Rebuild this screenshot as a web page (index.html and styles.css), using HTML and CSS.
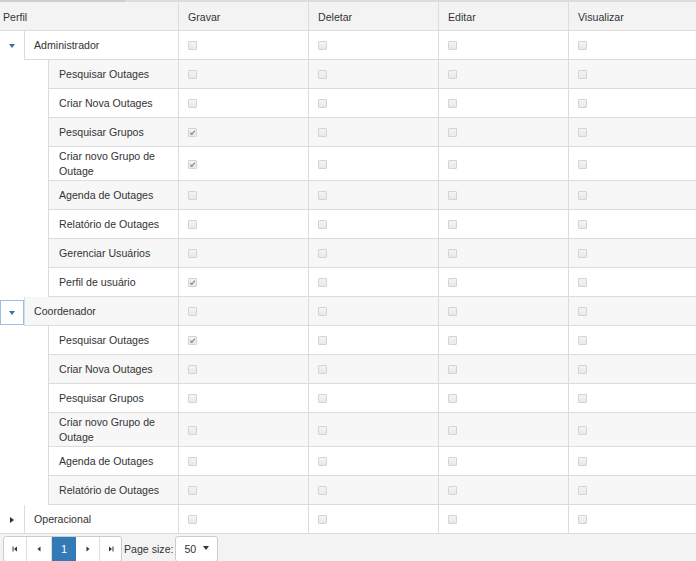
FILE: index.html
```html
<!DOCTYPE html>
<html lang="pt">
<head>
<meta charset="utf-8">
<title>Perfis</title>
<link rel="stylesheet" href="styles.css">
</head>
<body>
<div class="grid">
  <div class="topbar"><div class="thumb"></div></div>
  <div class="row head">
    <div class="h first">Perfil</div>
    <div class="h">Gravar</div>
    <div class="h">Deletar</div>
    <div class="h">Editar</div>
    <div class="h">Visualizar</div>
  </div>

  <div class="row">
    <div class="tree"><span class="exp"><i class="tri-down"></i></span><div class="c name">Administrador</div></div>
    <div class="c"><span class="cb"></span></div><div class="c"><span class="cb"></span></div><div class="c"><span class="cb"></span></div><div class="c"><span class="cb"></span></div>
  </div>
  <div class="row alt">
    <div class="tree"><span class="ind"></span><div class="c name child">Pesquisar Outages</div></div>
    <div class="c"><span class="cb"></span></div><div class="c"><span class="cb"></span></div><div class="c"><span class="cb"></span></div><div class="c"><span class="cb"></span></div>
  </div>
  <div class="row">
    <div class="tree"><span class="ind"></span><div class="c name child">Criar Nova Outages</div></div>
    <div class="c"><span class="cb"></span></div><div class="c"><span class="cb"></span></div><div class="c"><span class="cb"></span></div><div class="c"><span class="cb"></span></div>
  </div>
  <div class="row alt">
    <div class="tree"><span class="ind"></span><div class="c name child">Pesquisar Grupos</div></div>
    <div class="c"><span class="cb on"><svg viewBox="0 0 7 7"><path d="M1.2 3.8 L2.8 5.3 L5.8 1.6" fill="none" stroke="#8a8a8a" stroke-width="1.3"/></svg></span></div><div class="c"><span class="cb"></span></div><div class="c"><span class="cb"></span></div><div class="c"><span class="cb"></span></div>
  </div>
  <div class="row">
    <div class="tree"><span class="ind"></span><div class="c name child">Criar novo Grupo de Outage</div></div>
    <div class="c"><span class="cb on"><svg viewBox="0 0 7 7"><path d="M1.2 3.8 L2.8 5.3 L5.8 1.6" fill="none" stroke="#8a8a8a" stroke-width="1.3"/></svg></span></div><div class="c"><span class="cb"></span></div><div class="c"><span class="cb"></span></div><div class="c"><span class="cb"></span></div>
  </div>
  <div class="row alt">
    <div class="tree"><span class="ind"></span><div class="c name child">Agenda de Outages</div></div>
    <div class="c"><span class="cb"></span></div><div class="c"><span class="cb"></span></div><div class="c"><span class="cb"></span></div><div class="c"><span class="cb"></span></div>
  </div>
  <div class="row">
    <div class="tree"><span class="ind"></span><div class="c name child">Relatório de Outages</div></div>
    <div class="c"><span class="cb"></span></div><div class="c"><span class="cb"></span></div><div class="c"><span class="cb"></span></div><div class="c"><span class="cb"></span></div>
  </div>
  <div class="row alt">
    <div class="tree"><span class="ind"></span><div class="c name child">Gerenciar Usuários</div></div>
    <div class="c"><span class="cb"></span></div><div class="c"><span class="cb"></span></div><div class="c"><span class="cb"></span></div><div class="c"><span class="cb"></span></div>
  </div>
  <div class="row">
    <div class="tree"><span class="ind"></span><div class="c name child">Perfil de usuário</div></div>
    <div class="c"><span class="cb on"><svg viewBox="0 0 7 7"><path d="M1.2 3.8 L2.8 5.3 L5.8 1.6" fill="none" stroke="#8a8a8a" stroke-width="1.3"/></svg></span></div><div class="c"><span class="cb"></span></div><div class="c"><span class="cb"></span></div><div class="c"><span class="cb"></span></div>
  </div>

  <div class="row alt">
    <div class="tree"><span class="exp focus"><span class="fbox"><i class="tri-down"></i></span></span><div class="c name">Coordenador</div></div>
    <div class="c"><span class="cb"></span></div><div class="c"><span class="cb"></span></div><div class="c"><span class="cb"></span></div><div class="c"><span class="cb"></span></div>
  </div>
  <div class="row">
    <div class="tree"><span class="ind"></span><div class="c name child">Pesquisar Outages</div></div>
    <div class="c"><span class="cb on"><svg viewBox="0 0 7 7"><path d="M1.2 3.8 L2.8 5.3 L5.8 1.6" fill="none" stroke="#8a8a8a" stroke-width="1.3"/></svg></span></div><div class="c"><span class="cb"></span></div><div class="c"><span class="cb"></span></div><div class="c"><span class="cb"></span></div>
  </div>
  <div class="row alt">
    <div class="tree"><span class="ind"></span><div class="c name child">Criar Nova Outages</div></div>
    <div class="c"><span class="cb"></span></div><div class="c"><span class="cb"></span></div><div class="c"><span class="cb"></span></div><div class="c"><span class="cb"></span></div>
  </div>
  <div class="row">
    <div class="tree"><span class="ind"></span><div class="c name child">Pesquisar Grupos</div></div>
    <div class="c"><span class="cb"></span></div><div class="c"><span class="cb"></span></div><div class="c"><span class="cb"></span></div><div class="c"><span class="cb"></span></div>
  </div>
  <div class="row alt">
    <div class="tree"><span class="ind"></span><div class="c name child">Criar novo Grupo de Outage</div></div>
    <div class="c"><span class="cb"></span></div><div class="c"><span class="cb"></span></div><div class="c"><span class="cb"></span></div><div class="c"><span class="cb"></span></div>
  </div>
  <div class="row">
    <div class="tree"><span class="ind"></span><div class="c name child">Agenda de Outages</div></div>
    <div class="c"><span class="cb"></span></div><div class="c"><span class="cb"></span></div><div class="c"><span class="cb"></span></div><div class="c"><span class="cb"></span></div>
  </div>
  <div class="row alt">
    <div class="tree"><span class="ind"></span><div class="c name child">Relatório de Outages</div></div>
    <div class="c"><span class="cb"></span></div><div class="c"><span class="cb"></span></div><div class="c"><span class="cb"></span></div><div class="c"><span class="cb"></span></div>
  </div>

  <div class="row">
    <div class="tree"><span class="exp"><i class="tri-right"></i></span><div class="c name">Operacional</div></div>
    <div class="c"><span class="cb"></span></div><div class="c"><span class="cb"></span></div><div class="c"><span class="cb"></span></div><div class="c"><span class="cb"></span></div>
  </div>

  <div class="pager">
    <div class="btns">
      <span class="pb w23"><svg viewBox="0 0 6 6" width="6" height="6"><rect x="0.5" y="0.5" width="1" height="5" fill="#333"/><path d="M5 0.5 L5 5.5 L2 3 Z" fill="#333"/></svg></span>
      <span class="pb w25"><svg viewBox="0 0 6 6" width="6" height="6"><path d="M4.5 0.5 L4.5 5.5 L1.5 3 Z" fill="#333"/></svg></span>
      <span class="pb cur">1</span>
      <span class="pb w24"><svg viewBox="0 0 6 6" width="6" height="6"><path d="M1.5 0.5 L1.5 5.5 L4.5 3 Z" fill="#333"/></svg></span>
      <span class="pb w22 last"><svg viewBox="0 0 6 6" width="6" height="6"><path d="M1 0.5 L1 5.5 L4 3 Z" fill="#333"/><rect x="4.5" y="0.5" width="1" height="5" fill="#333"/></svg></span>
    </div>
    <span class="ps">Page size:</span>
    <span class="dd"><span class="ddv">50</span><svg viewBox="0 0 6 4" width="6" height="4"><path d="M0 0 L6 0 L3 4 Z" fill="#333"/></svg></span>
  </div>
</div>
</body>
</html>
```

FILE: styles.css
```css
html, body {
  margin: 0;
  padding: 0;
  background: #fff;
  overflow: hidden;
}
.grid {
  width: 696px;
  font-family: "Liberation Sans", Arial, sans-serif;
  font-size: 10.6px;
  color: #333;
}
.topbar {
  height: 2px;
  background: #dcdcdc;
}
.thumb {
  width: 125px;
  height: 2px;
  background: #cdcdcd;
}
.row {
  display: grid;
  grid-template-columns: 178px 130px 130px 130px 128px;
}
.head {
  background: #f3f3f3;
}
.h {
  box-sizing: border-box;
  height: 29px;
  border-bottom: 1px solid #dcdcdc;
  border-left: 1px solid #dcdcdc;
  padding: 1px 9px 0;
  display: flex;
  align-items: center;
}
.h.first {
  border-left: 0;
  padding-left: 3px;
}
.tree {
  display: flex;
}
.exp {
  flex: none;
  width: 24px;
  display: flex;
  align-items: center;
  justify-content: center;
}
.exp.focus {
  align-items: flex-end;
  justify-content: flex-start;
}
.fbox {
  box-sizing: border-box;
  width: 24px;
  height: 25px;
  border: 1px solid #9cbde9;
  background: #fff;
  display: flex;
  align-items: center;
  justify-content: center;
  margin-bottom: 1px;
}
.ind {
  flex: none;
  width: 48px;
}
.c {
  box-sizing: border-box;
  min-height: 29px;
  border-bottom: 1px solid #dcdcdc;
  border-left: 1px solid #dcdcdc;
  padding: 2px 9px 1px;
  line-height: 15px;
  display: flex;
  align-items: center;
  background: #fff;
}
.name {
  flex: 1;
  min-width: 0;
}
.name.child {
  padding-left: 10px;
}
.alt .c {
  background: #f7f7f7;
}
.cb {
  box-sizing: border-box;
  width: 9px;
  height: 9px;
  border: 1px solid #d4d4d4;
  border-radius: 1px;
  background: linear-gradient(#f4f4f4, #e9e9e9);
  display: inline-flex;
  align-items: center;
  justify-content: center;
}
.cb svg {
  width: 7px;
  height: 7px;
  display: block;
}
.tri-down {
  width: 0;
  height: 0;
  border-left: 3px solid transparent;
  border-right: 3px solid transparent;
  border-top: 4px solid #3b70a8;
  margin-top: 1px;
}
.tri-right {
  width: 0;
  height: 0;
  border-top: 3px solid transparent;
  border-bottom: 3px solid transparent;
  border-left: 4px solid #333;
}
.pager {
  margin-top: -1px;
  border-top: 1px solid #dcdcdc;
  background: #f3f3f3;
  height: 28px;
  padding: 2px 3px 0;
  box-sizing: border-box;
  display: flex;
  align-items: flex-start;
  overflow: hidden;
}
.btns {
  display: flex;
  border: 1px solid #ccc;
  border-radius: 3px;
  background: #fff;
  height: 26px;
  box-sizing: border-box;
  overflow: hidden;
}
.pb {
  display: flex;
  align-items: center;
  justify-content: center;
  border-right: 1px solid #ddd;
  height: 100%;
}
.pb.last { border-right: 0; }
.w22 { width: 21px; }
.w23 { width: 22px; }
.w24 { width: 23px; }
.w25 { width: 24px; }
.pb.cur {
  width: 24px;
  background: #337ab7;
  color: #fff;
  font-size: 11px;
  border-right: 0;
}
.ps {
  margin-left: 2px;
  height: 26px;
  line-height: 26px;
}
.dd {
  margin-left: 2px;
  width: 43px;
  height: 26px;
  box-sizing: border-box;
  border: 1px solid #ccc;
  border-radius: 3px;
  background: #fff;
  display: flex;
  align-items: center;
  padding-left: 8px;
}
.ddv {
  flex: 1;
}
.dd svg {
  margin-right: 8px;
  margin-top: -3px;
}
```
